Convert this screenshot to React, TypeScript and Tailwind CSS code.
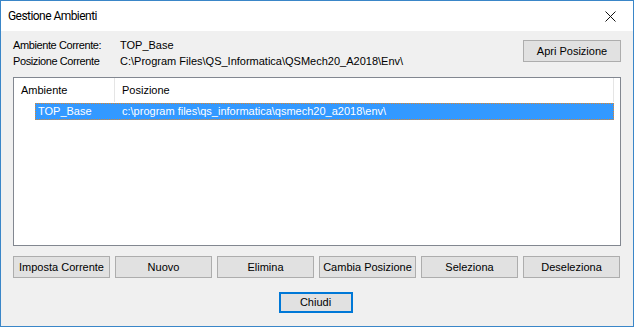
import React from "react";

const buttons = [
  "Imposta Corrente",
  "Nuovo",
  "Elimina",
  "Cambia Posizione",
  "Seleziona",
  "Deseleziona",
];

const ui = { fontFamily: '"Liberation Sans", Arial, sans-serif' };

const WinButton = ({ label, className = "" }: { label: string; className?: string }) => (
  <button
    className={`h-[22px] bg-[#e1e1e1] border border-[#adadad] text-[11px] font-normal text-black leading-none ${className}`}
    style={ui}
  >
    {label}
  </button>
);

const App: React.FC = () => {
  return (
    <div className="w-[634px] h-[327px] border border-[#3a86c8] bg-[#f0f0f0] flex flex-col overflow-hidden">
      {/* title bar */}
      <div className="h-[30px] bg-white flex items-center justify-between pl-[7px] pr-[17px] shrink-0">
        <span
          className="text-[12px] text-black tracking-[-0.55px]"
          style={{ fontFamily: 'Roboto, "Noto Sans", sans-serif' }}
        >
          Gestione Ambienti
        </span>
        <svg width="11" height="11" viewBox="0 0 11 11" className="mt-[1px]">
          <path d="M0.5 0.5 L10.5 10.5 M10.5 0.5 L0.5 10.5" stroke="#111" strokeWidth="1" />
        </svg>
      </div>

      {/* body */}
      <div className="flex flex-col px-[12px] pt-[6px] text-[11px] text-black" style={ui}>
        <div className="flex justify-between items-start">
          <div className="grid grid-cols-[107px_1fr] leading-[16px]">
            <span className="tracking-[-0.4px]">Ambiente Corrente:</span>
            <span>TOP_Base</span>
            <span className="tracking-[-0.4px]">Posizione Corrente</span>
            <span>C:\Program Files\QS_Informatica\QSMech20_A2018\Env\</span>
          </div>
          <WinButton label="Apri Posizione" className="w-[98px] mt-[3px]" />
        </div>

        {/* list view */}
        <div className="mt-[8px] h-[169px] border border-[#828790] bg-white flex flex-col">
          <div className="h-[24px] flex items-stretch shrink-0">
            <div className="w-[101px] border-r border-[#e5e5e5] pl-[7px] flex items-center">Ambiente</div>
            <div className="w-[499px] border-r border-[#e5e5e5] pl-[7px] flex items-center">Posizione</div>
          </div>
          <div className="mt-[1px] ml-[21px] w-[579px] h-[17px] bg-[#3399ff] border border-dotted border-[#e0862a] text-white flex items-center">
            <span className="w-[80px] pl-[2px]">TOP_Base</span>
            <span className="pl-[6px]">c:\program files\qs_informatica\qsmech20_a2018\env\</span>
          </div>
        </div>

        {/* action buttons */}
        <div className="mt-[10px] flex gap-[5px]">
          {buttons.map((b) => (
            <WinButton key={b} label={b} className="w-[97px]" />
          ))}
        </div>

        <div className="mt-[14px] flex justify-center">
          <button
            className="w-[74px] h-[21px] bg-[#e1e1e1] border-2 border-[#0078d7] text-[11px] font-normal leading-none text-black -ml-[3px]"
            style={ui}
          >
            Chiudi
          </button>
        </div>
      </div>
    </div>
  );
};

export default App;
